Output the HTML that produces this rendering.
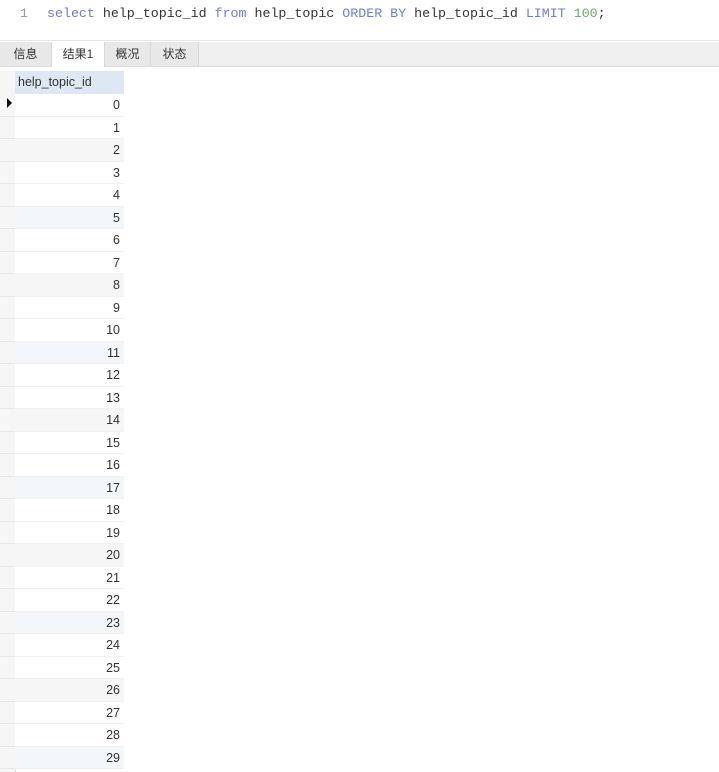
<!DOCTYPE html>
<html><head><meta charset="utf-8"><style>
body{margin:0;width:719px;height:772px;background:#fff;position:relative;overflow:hidden;font-family:"Liberation Sans","Noto Sans CJK SC",sans-serif;}
.ed{position:absolute;left:0;top:0;width:719px;height:40px;border-bottom:1px solid #e6e6e6;font-family:"Liberation Mono",monospace;font-size:13.3px;color:#333;}
.ed .ln{position:absolute;left:20px;top:6px;color:#999;}
.ed .code{position:absolute;left:47px;top:6px;white-space:pre;}
.k{color:#6b7fd6}.n{color:#6aa86a}
.tabs{position:absolute;left:0;top:42px;width:719px;height:24px;background:#f0f0f0;border-bottom:1px solid #ddd;}
.tab{position:absolute;top:0;height:24px;line-height:24px;font-size:12px;color:#333;text-align:center;background:#e8e8e8;border-right:1px solid #d8d8d8}
.tab.a{background:#fff;height:25px}
.hdr{position:absolute;left:15px;top:71px;width:109px;height:23px;background:#dde8f4;font-size:12.5px;line-height:23px;padding-left:3px;box-sizing:border-box;color:#333}
.ind{position:absolute;left:0;top:71px;width:15px;height:701px;background:#f6f6f6;border-right:1px solid #e2e2e2}
.r{position:absolute;left:15px;width:109px;height:22.5px;box-sizing:border-box;border-bottom:1px solid #f2f2f2;text-align:right;padding-right:4px;font-size:12.5px;line-height:22px;color:#333}
.ib{position:absolute;left:0;width:15px;height:22.5px;box-sizing:border-box;border-bottom:1px solid #e6e6e6}
</style></head><body>
<div class="ed"><span class="ln">1</span><span class="code"><span class="k">select</span> help_topic_id <span class="k">from</span> help_topic <span class="k">ORDER BY</span> help_topic_id <span class="k">LIMIT</span> <span class="n">100</span>;</span></div>
<div class="tabs">
<div class="tab" style="left:0;width:51px">信息</div>
<div class="tab a" style="left:52px;width:52px">结果1</div>
<div class="tab" style="left:105px;width:45px">概况</div>
<div class="tab" style="left:151px;width:47px">状态</div>
</div>
<div class="ind"></div>
<div class="hdr">help_topic_id</div>
<div id="rows"></div>
<div style="position:absolute;left:7px;top:98px;width:0;height:0;border-top:5px solid transparent;border-bottom:5px solid transparent;border-left:5px solid #111"></div>
<script>
var h='';for(var i=0;i<30;i++){var t=94+i*22.5;var bg=(i%3==2)?(i%2?'#f3f7fc':'#f6f6f6'):'#fff';
h+='<div class="ib" style="top:'+t+'px"></div><div class="r" style="top:'+t+'px;background:'+bg+'">'+i+'</div>';}
document.getElementById('rows').innerHTML=h;
</script>
</body></html>
